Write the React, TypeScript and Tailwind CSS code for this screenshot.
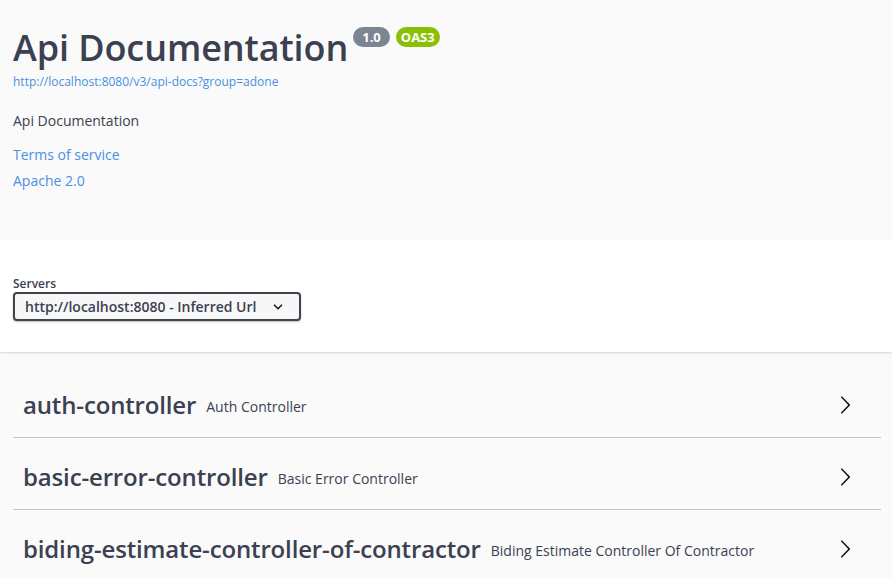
import { ChevronDown } from "lucide-react";

const tags = [
  { name: "auth-controller", desc: "Auth Controller" },
  { name: "basic-error-controller", desc: "Basic Error Controller" },
  { name: "biding-estimate-controller-of-contractor", desc: "Biding Estimate Controller Of Contractor" },
];

function Arrow() {
  return (
    <svg width="20" height="20" viewBox="0 0 20 20" className="ml-auto shrink-0 fill-[#111]">
      <path d="M13.25 10L6.109 2.58c-.268-.27-.268-.707 0-.979.268-.27.701-.27.969 0l7.83 7.908c.268.271.268.709 0 .979l-7.83 7.908c-.268.271-.701.27-.969 0-.268-.269-.268-.707 0-.979L13.25 10z" />
    </svg>
  );
}

export default function App() {
  return (
    <div className="min-h-screen bg-[#fafafa] text-[#3b4151] font-['Open_Sans','Noto_Sans_CJK_KR',sans-serif]">
      {/* info */}
      <div className="h-[240px] px-[13px] pt-[22px]">
        <div className="flex items-start">
          <h1 className="text-[36px] font-semibold leading-[52px] tracking-[-0.1px] text-[#3b4151]">Api Documentation</h1>
          <span className="ml-[5px] mt-[5px] rounded-[10px] bg-[#7d8492] px-[9px] text-[13px] font-bold leading-[20px] text-white">1.0</span>
          <span className="ml-[6px] mt-[5px] rounded-[10px] bg-[#89bf04] px-[5px] text-[13px] font-bold leading-[20px] text-white">OAS3</span>
        </div>
        <a className="block text-[12px] leading-[16px] text-[#4990e2]">http://localhost:8080/v3/api-docs?group=adone</a>
        <p className="mt-[21px] text-[14px] leading-[20px]">Api Documentation</p>
        <a className="mt-[14px] block text-[14px] leading-[20px] text-[#4990e2]">Terms of service</a>
        <a className="mt-[6px] block text-[14px] leading-[20px] text-[#4990e2]">Apache 2.0</a>
      </div>

      {/* servers */}
      <div className="h-[112px] bg-white px-[13px] pt-[36px] shadow-[0_1px_2px_0_rgba(0,0,0,0.15)]">
        <div className="text-[12px] font-semibold leading-[16px]">Servers</div>
        <div className="flex h-[29px] w-[288px] items-center rounded-[4px] border-2 border-[#41444e] bg-[#f7f7f7] pl-[10px] shadow-[0_1px_2px_0_rgba(0,0,0,0.25)]">
          <span className="text-[14px] font-semibold">http://localhost:8080 - Inferred Url</span>
          <ChevronDown className="ml-auto mr-[14px] h-[14px] w-[14px] text-[#222]" strokeWidth={3} />
        </div>
      </div>

      {/* tags */}
      <div className="pl-[13px] pr-[11px] pt-[14px]">
        {tags.map((t) => (
          <div key={t.name} className="flex h-[72px] items-center border-b border-[#c6c6c6] pl-[10px] pr-[26px] pt-[7px]">
            <span className="text-[24px] font-semibold leading-[32px] tracking-[-0.15px]">{t.name}</span>
            <span className="ml-[10px] mt-[2px] text-[14px]">{t.desc}</span>
            <Arrow />
          </div>
        ))}
      </div>
    </div>
  );
}
